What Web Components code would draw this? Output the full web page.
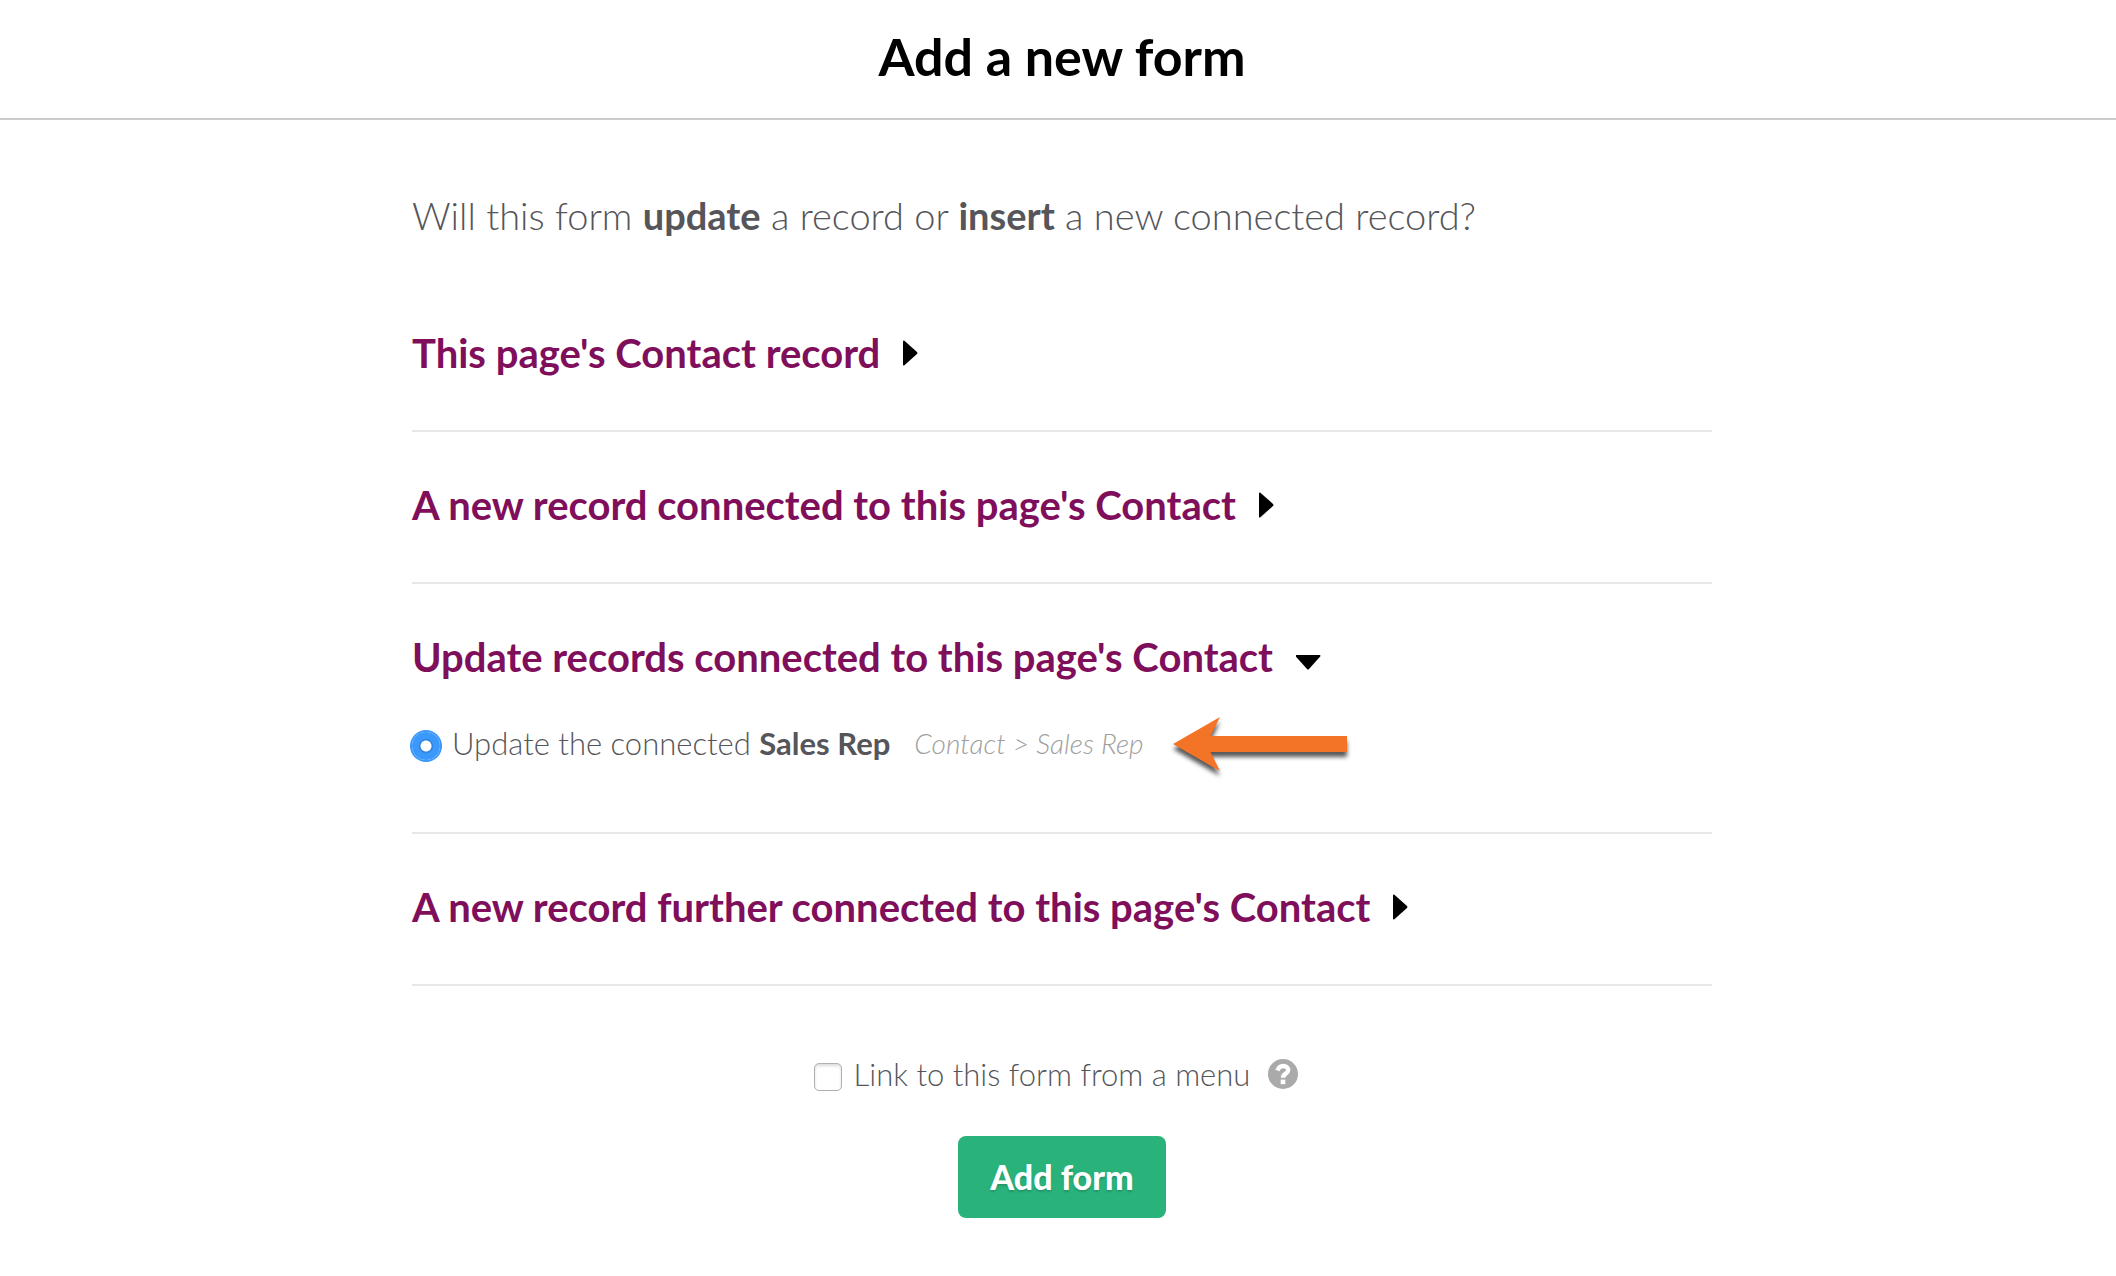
<!DOCTYPE html>
<html lang="en">
<head>
<meta charset="utf-8">
<meta name="viewport" content="width=device-width, initial-scale=1">
<title>Add a new form</title>
<style>
  body { margin: 0; background: #fff; color: #55555a; font: 300 31px/40px Lato, "Open Sans", sans-serif; }
</style>
</head>
<body>
<add-form-page></add-form-page>

<script>
class BaseElement extends HTMLElement {
  constructor() {
    super();
    this.attachShadow({ mode: 'open' }).innerHTML = this.constructor.markup;
  }
}

class PageHeader extends BaseElement {
  static markup = `
    <style>
      :host { display: block; padding: 24px 0 30px 8px; border-bottom: 2px solid #ccc; text-align: center; }
      h1 { margin: 0; color: #000; font-size: 52px; line-height: 64px; font-weight: 700; }
    </style>
    <h1><slot></slot></h1>`;
}

class RecordSection extends BaseElement {
  static markup = `
    <style>
      :host { display: block; padding: 46px 0 50px; border-bottom: 2px solid #e7e7e7; }
      h2 { margin: 0; font-size: 40px; line-height: 54px; font-weight: 700; }
      button { display: flex; align-items: center; gap: 23px; padding: 0; border: 0; background: none;
               color: #7f0e5b; font: inherit; text-align: left; cursor: pointer; }
      svg { flex: none; height: 26px; fill: #000; }
      .down, :host([open]) .right { display: none; }
      :host([open]) .down { display: block; }
      .body { display: none; padding: 32px 0 12px; }
      :host([open]) .body { display: block; }
    </style>
    <h2><button type="button" aria-controls="body">
      <slot name="title"></slot>
      <svg class="right" width="15" viewBox="0 0 15 26" aria-hidden="true"><path d="M0 1.5Q0 0 1.4 .8L14 12Q15 13 14 14L1.4 25.2Q0 26 0 24.500Z"/></svg>
      <svg class="down" width="26" viewBox="0 0 26 26" aria-hidden="true"><path d="M.5 11H23.500Q25 11 24.200 12.400L13 25Q12 26 11 25L-.2 12.400Q-1 11 .5 11Z"/></svg>
    </button></h2>
    <div class="body" id="body"><slot></slot></div>`;
  connectedCallback() {
    const button = this.shadowRoot.querySelector('button');
    const sync = () => button.setAttribute('aria-expanded', this.hasAttribute('open'));
    button.addEventListener('click', () => { this.toggleAttribute('open'); sync(); });
    sync();
  }
}

class RecordOption extends BaseElement {
  static markup = `
    <style>
      :host { display: flex; align-items: center; gap: 24px; }
      label { display: flex; align-items: center; gap: 12px; }
      input { appearance: none; flex: none; box-sizing: border-box; width: 28px; height: 28px; margin: 6px 0 0; border-radius: 50%;
              background: #fff; box-shadow: 0 0 0 2px #ccc; }
      input:checked { background: radial-gradient(circle, #fff 5px, #2f80da 6px, #3b99fc 8px); box-shadow: 0 0 0 2px #3b99fc; }
      .path { color: #a0a0a0; font-size: 28px; font-style: italic; }
    </style>
    <label for="pick"><input type="radio" id="pick" name="record" checked><span><slot></slot></span></label>
    <span class="path"><slot name="path"></slot></span>
    <slot name="pointer"></slot>`;
}

class PointerArrow extends BaseElement {
  static markup = `
    <style>
      :host { display: block; margin-left: 6px; }
      svg { display: block; overflow: visible; filter: drop-shadow(0 5px 2px rgba(0, 0, 0, .65)); }
    </style>
    <svg width="175" height="54" viewBox="0 0 175 54" aria-hidden="true">
      <path fill="#f37427" d="M0 28 47 1 37.500 20H174V36H37.500L47 55Z"/>
    </svg>`;
}

class MenuLinkOption extends BaseElement {
  static markup = `
    <style>
      :host { display: flex; justify-content: center; align-items: center; gap: 18px; padding-right: 12px; }
      label { display: flex; align-items: center; gap: 12px; }
      input { appearance: none; flex: none; box-sizing: border-box; width: 28px; height: 28px; margin: 6px 0 0; border: 1px solid #b0b0b0;
              border-radius: 5px; background: #fff; box-shadow: inset 0 2px 3px rgba(0, 0, 0, .14); }
      input:checked { background: #3b99fc; }
      button { display: block; padding: 0; border: 0; background: none; cursor: help; }
      svg { display: block; }
    </style>
    <label for="link"><input type="checkbox" id="link"><span><slot></slot></span></label>
    <button type="button" aria-label="Help">
      <svg width="30" height="30" viewBox="0 0 30 30"><circle cx="15" cy="15" r="15" fill="#aaa"/>
      <path d="M9.400 11.600C10.600 8.400 12.300 7 15.200 7C18.200 7 20.200 8.700 20.200 11.100C20.200 14.900 15 14.400 15 18.800" fill="none" stroke="#fff" stroke-width="4.400"/><path fill="#fff" d="M12.700 20.600H17.300V25.200H12.700Z"/></svg>
    </button>`;
}

class PrimaryButton extends BaseElement {
  static markup = `
    <style>
      :host { display: flex; justify-content: center; }
      button { padding: 21px 32px; border: 0; border-radius: 8px; background: #2ab27b; color: #fff;
               font: 900 34px/40px Lato, "Open Sans", sans-serif; text-shadow: 0 2px 2px rgba(0, 0, 0, .16); cursor: pointer; }
    </style>
    <button type="button"><slot></slot></button>`;
}

class AddFormPage extends BaseElement {
  static markup = `
    <style>
      :host { display: block; }
      main { max-width: 1300px; margin: 0 auto; padding: 68px 0 58px 8px; }
      .question { margin: 0 0 64px; font-size: 38px; line-height: 54px; }
      strong { font-weight: 700; }
      record-section:first-of-type { padding-top: 20px; }
      menu-link-option { margin: 68px 0 42px; }
    </style>
    <page-header>Add a new form</page-header>
    <main>
      <p class="question">Will this form <strong>update</strong> a record or <strong>insert</strong> a new connected record?</p>
      <record-section><span slot="title">This page's Contact record</span></record-section>
      <record-section><span slot="title">A new record connected to this page's Contact</span></record-section>
      <record-section open>
        <span slot="title">Update records connected to this page's Contact</span>
        <record-option>Update the connected <strong>Sales Rep</strong><span slot="path">Contact &gt; Sales Rep</span><pointer-arrow slot="pointer"></pointer-arrow></record-option>
      </record-section>
      <record-section><span slot="title">A new record further connected to this page's Contact</span></record-section>
      <menu-link-option>Link to this form from a menu</menu-link-option>
      <primary-button>Add form</primary-button>
    </main>`;
}

customElements.define('page-header', PageHeader);
customElements.define('record-section', RecordSection);
customElements.define('record-option', RecordOption);
customElements.define('pointer-arrow', PointerArrow);
customElements.define('menu-link-option', MenuLinkOption);
customElements.define('primary-button', PrimaryButton);
customElements.define('add-form-page', AddFormPage);
</script>
</body>
</html>
